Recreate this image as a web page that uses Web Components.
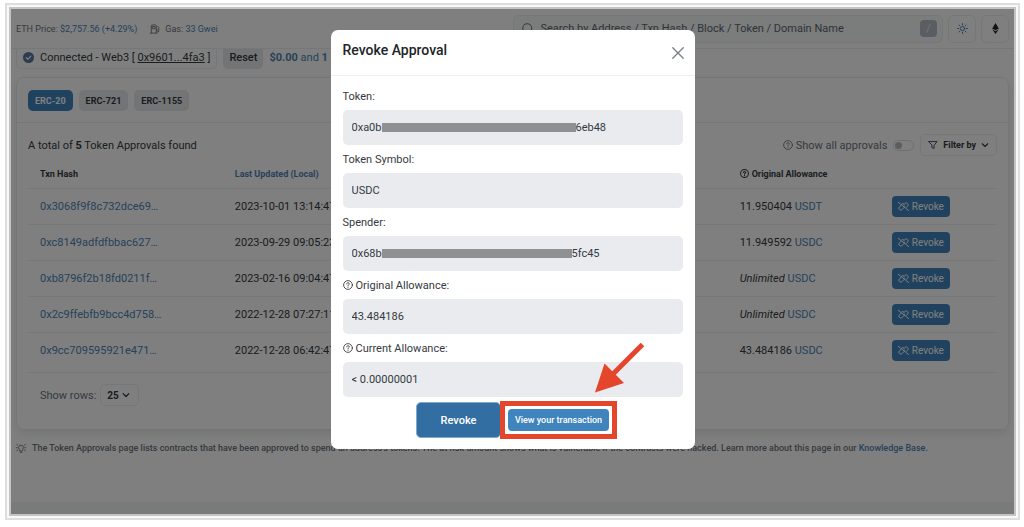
<!DOCTYPE html>
<html lang="en">
<head>
<meta charset="utf-8">
<title>Token Approvals</title>
<style>
body { margin: 0; background: #fff; font-family: Roboto, "Liberation Sans", sans-serif; font-size: 11px; color: #343a40; }
</style>
</head>
<body>
<page-frame>
  <top-bar></top-bar>
  <wallet-bar></wallet-bar>
  <approvals-card></approvals-card>
  <page-note></page-note>
  <revoke-dialog slot="overlay"></revoke-dialog>
</page-frame>

<script>
const BASE = `<style>
*, *::before, *::after { box-sizing: border-box; }
button, input, select { font: inherit; color: inherit; margin: 0; }
button { cursor: pointer; }
a { color: #4c84b4; text-decoration: none; }
</style>`;

class Base extends HTMLElement {
  constructor() {
    super();
    this.attachShadow({ mode: 'open' }).innerHTML = BASE + this.template();
  }
}

const ICONS = {
  help: '<circle cx="8" cy="8" r="7"/><path d="M6 6.2C6 5 6.8 4.4 8 4.4s2.1.7 2.1 1.8C10.100 7.600 8 7.600 8 9.100"/><path d="M8 11.200v.6"/>',
  search: '<circle cx="7" cy="7" r="6"/><path d="M11.500 11.500l3.500 3.500"/>',
  gas: '<path d="M2 14.500V3a1.500 1.500 0 0 1 1.500-1.500h5A1.500 1.500 0 0 1 10 3v11.500M.800 14.500h10.400M4 4h4v3.500H4zM10 8.500h1.200v3a1.400 1.400 0 0 0 2.800 0V5.500L12 3.500"/>',
  sun: '<circle cx="8" cy="8" r="3"/><path d="M8 .8v2M8 13.200v2M.8 8h2M13.200 8h2M2.900 2.900l1.400 1.400M11.700 11.700l1.400 1.400M2.900 13.100l1.400-1.400M11.700 4.300l1.400-1.400"/>',
  eth: '<path fill="currentColor" stroke="none" d="M8 0l4.800 8L8 10.700 3.200 8zM8 16L3.200 9.200 8 12l4.800-2.800z"/>',
  check: '<circle cx="8" cy="8" r="8" fill="currentColor" stroke="none"/><path d="M4.600 8.200L7 10.500 11.400 6" stroke="#fff" stroke-width="1.800"/>',
  funnel: '<path d="M1.500 2.500h13L9.700 8.500v5L6.300 12V8.500z"/>',
  chevron: '<path d="M2.500 5.500L8 11l5.500-5.500"/>',
  close: '<path d="M1 1l14 14M15 1L1 15"/>',
  bulb: '<path d="M6 12.300c0-2-1.800-2.600-1.800-5.100a3.800 3.800 0 0 1 7.600 0c0 2.500-1.800 3.100-1.800 5.100zM6.500 15h3M.3 7.500h1.700M14 7.500h1.700M1.200 2.500l1.500 1M14.800 2.500l-1.500 1M1.200 12.300l1.500-1M14.800 12.300l-1.500-1"/>',
  unlink: '<path d="M.500 2l15 12M4.800 6L2.200 8.400a2.700 2.700 0 0 0 0 3.900 2.700 2.700 0 0 0 3.900 0l2.400-2.400c.8-.9 1-2 .6-3M5.500 4.200c1.200-1 2.600-.6 3.400.4M8.500 5l1.400-1.400a2.800 2.800 0 0 1 4 0 2.800 2.800 0 0 1 0 4L12 9.500"/>'
};
customElements.define('app-icon', class extends HTMLElement {
  connectedCallback() {
    if (this.shadowRoot) return;
    this.attachShadow({ mode: 'open' }).innerHTML = `<style>
      :host { display: inline-flex; width: 10px; height: 10px; flex: none; }
      svg { width: 100%; height: 100%; overflow: visible; }
    </style><svg viewBox="0 0 16 16" fill="none" stroke="currentColor" stroke-width="${this.getAttribute('weight') || 1.4}" stroke-linecap="round" stroke-linejoin="round" aria-hidden="true">${ICONS[this.getAttribute('name')]}</svg>`;
  }
});

customElements.define('page-frame', class extends Base {
  template() { return `<style>
    :host { display: flex; min-height: 100vh; padding: 3px 4px 7px 5px; box-sizing: border-box; }
    .outer { flex: 1; display: flex; border: 2px solid #dedede; background: #f8f8f8; padding: 2px; min-width: 0; }
    .page { flex: 1; min-width: 0; position: relative; display: flex; flex-direction: column; border: 2px solid #c4c4c4; background: #fff; }
    .end { margin-top: auto; height: 12px; background: #f3f7f5; }
    .shade { position: absolute; inset: 0; background: rgba(0,0,0,.5); display: flex; justify-content: center; align-items: flex-start; padding-top: 21px; z-index: 2; }
  </style>
  <div class="outer"><div class="page"><slot></slot><div class="end"></div><div class="shade"><slot name="overlay"></slot></div></div></div>`; }
});

customElements.define('top-bar', class extends Base {
  template() { return `<style>
    :host { display: flex; align-items: center; justify-content: space-between; height: 40px; padding: 0 5px; border-bottom: 1px solid #eceef0; box-sizing: border-box; color: #6c757d; }
    .stats { display: flex; align-items: center; gap: 13px; font-size: 9px; }
    .gas { display: flex; align-items: center; gap: 5px; }
    .tools { display: flex; gap: 5px; width: 50%; }
    form { flex: 1; display: flex; align-items: center; gap: 7px; height: 28px; padding: 0 5px 0 8px; border: 1px solid #eceff1; border-radius: 6px; background: #f7f9f9; }
    form app-icon { width: 12px; height: 12px; }
    input { flex: 1; min-width: 0; border: 0; padding: 0; background: none; outline: 0; }
    input::placeholder { color: #5c6670; opacity: 1; }
    kbd { font: inherit; width: 17px; height: 17px; line-height: 17px; text-align: center; background: #b4bac2; color: #eee; border-radius: 4px; }
    button { width: 28px; height: 28px; padding: 0; display: flex; align-items: center; justify-content: center; border: 1px solid #eceef0; border-radius: 6px; background: none; }
    .sun { color: #4c84b4; } .eth { color: #212529; }
    button app-icon { width: 11px; height: 11px; }
  </style>
  <div class="stats"><span>ETH Price: <a href="#">$2,757.56 (+4.29%)</a></span><span class="gas"><app-icon name="gas"></app-icon><span>Gas: <a href="#">33 Gwei</a></span></span></div>
  <div class="tools"><form role="search"><app-icon name="search"></app-icon><input type="text" aria-label="Search" placeholder="Search by Address / Txn Hash / Block / Token / Domain Name"><kbd>/</kbd></form>
  <button class="sun" aria-label="Theme"><app-icon name="sun"></app-icon></button><button class="eth" aria-label="Network"><app-icon name="eth"></app-icon></button></div>`; }
});

customElements.define('wallet-bar', class extends Base {
  template() { return `<style>
    :host { display: flex; align-items: flex-start; gap: 6px; padding: 0 5px; height: 28px; box-sizing: border-box; }
    .wallet, button { height: 20px; display: flex; align-items: center; border-radius: 0 0 5px 5px; padding: 0 6px 3px; }
    .wallet { gap: 6px; border: 1px solid #eceef0; border-top: 0; white-space: pre; }
    .wallet app-icon { color: #54789c; width: 11px; height: 11px; }
    .wallet a { color: inherit; text-decoration: underline; }
    button { border: 0; background: #e6e8ec; font-weight: 500; }
    p { margin: 0; line-height: 18px; color: #4c84b4; }
    b { font-weight: 700; }
  </style>
  <div class="wallet"><app-icon name="check"></app-icon><span>Connected - Web3 [ <a href="#">0x9601...4fa3</a> ]</span></div>
  <button>Reset</button><p><b>$0.00</b> and <b>1</b></p>`; }
});

const ROWS = [
  ['0x3068f9f8c732dce69…', '2023-10-01 13:14:47', '11.950404', 'USDT'],
  ['0xc8149adfdfbbac627…', '2023-09-29 09:05:23', '11.949592', 'USDC'],
  ['0xb8796f2b18fd0211f…', '2023-02-16 09:04:47', '<i>Unlimited</i>', 'USDC'],
  ['0x2c9ffebfb9bcc4d758…', '2022-12-28 07:27:11', '<i>Unlimited</i>', 'USDC'],
  ['0x9cc709595921e471…', '2022-12-28 06:42:47', '43.484186', 'USDC']
];
customElements.define('approvals-card', class extends Base {
  template() { return `<style>
    :host { display: block; margin: 0 5px; border: 1px solid #e8ebec; border-radius: 8px; box-shadow: 0 4px 8px rgba(60,80,80,.12); }
    .tabs { display: flex; gap: 6px; padding: 12px 11px 11px; border-bottom: 1px solid #eceef0; }
    .tabs button { height: 21px; border: 0; border-radius: 5px; padding: 0 7px; background: #e6e8ec; font-size: 9px; font-weight: 700; }
    .tabs .on { background: #4084be; color: #fff; }
    .bar { display: flex; align-items: center; gap: 6px; padding: 11px 11px 0; }
    .bar p { margin: 0 auto 0 0; } b { font-weight: 700; }
    .switch { display: flex; align-items: center; gap: 3px; color: #6c757d; }
    .switch input { appearance: none; width: 21px; height: 11px; margin-left: 3px; border: 1px solid #dcdfe2; border-radius: 6px; display: flex; align-items: center; padding: 0 1px; }
    .switch input::before { content: ""; width: 7px; height: 7px; border-radius: 50%; background: #b8bcc0; }
    .filter { height: 22px; display: flex; align-items: center; gap: 5px; padding: 0 7px; border: 1px solid #eceef0; border-radius: 5px; background: none; font-size: 9px; font-weight: 700; }
    .filter app-icon:last-child { width: 8px; height: 8px; }
    .wrap { padding: 3px 11px 0; }
    table { width: 100%; table-layout: fixed; border-collapse: separate; border-spacing: 0; }
    th, td { text-align: left; padding: 0 12px; height: 36px; border-bottom: 1px solid #eceef0; white-space: nowrap; font-weight: 400; }
    th { height: 30px; font-size: 9px; font-weight: 700; }
    th app-icon { width: 9px; height: 9px; margin-right: 3px; vertical-align: -1px; }
    tr:last-child td { height: 40px; padding-bottom: 4px; }
    thead tr:last-child th { height: 30px; }
    .c1 { width: 20.1%; } .c3 { width: 15.7%; } .c4 { width: 12.1%; }
    td button { display: flex; align-items: center; gap: 3px; height: 21px; padding: 0 6px; border: 0; border-radius: 4px; background: #4084be; color: #fff; font-size: 10px; }
    td button app-icon { width: 11px; height: 11px; }
    .rows { display: flex; align-items: center; gap: 4px; padding: 11px 23px 23px; color: #6c757d; }
    .pick { display: grid; align-items: center; width: 39px; color: #343a40; }
    .pick > * { grid-area: 1 / 1; }
    select { appearance: none; height: 22px; padding: 0 6px; border: 1px solid #eceef0; border-radius: 5px; background: none; font-size: 10px; font-weight: 700; }
    .pick app-icon { width: 8px; height: 8px; justify-self: end; margin-right: 9px; pointer-events: none; }
  </style>
  <div class="tabs"><button class="on">ERC-20</button><button>ERC-721</button><button>ERC-1155</button></div>
  <div class="bar"><p>A total of <b>5</b> Token Approvals found</p>
    <label class="switch"><app-icon name="help"></app-icon>Show all approvals<input type="checkbox"></label>
    <button class="filter"><app-icon name="funnel"></app-icon>Filter by<app-icon name="chevron" weight="2.200"></app-icon></button></div>
  <div class="wrap"><table><thead><tr><th class="c1">Txn Hash</th><th><a href="#">Last Updated (Local)</a></th><th class="c3"><app-icon name="help" weight="1.800"></app-icon>Original Allowance</th><th class="c4"></th></tr></thead>
  <tbody>${ROWS.map(r => `<tr><td><a href="#">${r[0]}</a></td><td>${r[1]}</td><td>${r[2]} <a href="#">${r[3]}</a></td><td><button><app-icon name="unlink"></app-icon>Revoke</button></td></tr>`).join('')}</tbody></table></div>
  <div class="rows"><label for="n">Show rows:</label><span class="pick"><select id="n"><option>25</option></select><app-icon name="chevron" weight="2.400"></app-icon></span></div>`; }
});

customElements.define('page-note', class extends Base {
  template() { return `<style>
    :host { display: flex; align-items: center; gap: 6px; padding: 11px 5px; font-size: 9px; font-weight: 500; line-height: 14px; color: #6c757d; white-space: nowrap; }
  </style><app-icon name="bulb"></app-icon><span>The Token Approvals page lists contracts that have been approved to spend an address's tokens. The at risk amount shows what is vulnerable if the contracts were hacked. Learn more about this page in our <a href="#">Knowledge Base</a>.</span>`; }
});

customElements.define('modal-field', class extends HTMLElement {
  connectedCallback() {
    if (this.shadowRoot) return;
    const a = n => this.getAttribute(n);
    const value = a('tail')
      ? `<input id="f" class="part" readonly value="${a('value')}"><span class="bar"></span><input class="part" aria-label="${a('label')} end" readonly value="${a('tail')}">`
      : `<input id="f" readonly value="${a('value')}">`;
    this.attachShadow({ mode: 'open' }).innerHTML = BASE + `<style>
      :host { display: block; }
      label { display: flex; align-items: center; gap: 3px; height: 28px; }
      .box { display: flex; align-items: center; height: 35px; padding: 0 9px; border-radius: 5px; background: #e9ebee; }
      input { flex: 1; min-width: 0; border: 0; padding: 0; background: none; outline: 0; }
      .part { flex: none; width: 30px; }
      .part:last-child { width: 40px; }
      .bar { height: 9px; width: var(--bar, 194px); background: #8e9092; }
    </style><label for="f">${this.hasAttribute('help') ? '<app-icon name="help"></app-icon>' : ''}${a('label')}:</label><div class="box">${value}</div>`;
  }
});

customElements.define('revoke-dialog', class extends Base {
  template() { return `<style>
    :host { display: block; position: relative; width: 364px; background: #fff; border-radius: 7px; }
    header { display: flex; align-items: center; justify-content: space-between; height: 46px; padding: 0 11px 0 12px; border-bottom: 1px solid #eceef0; }
    h2 { margin: 0 0 6px; font-size: 14px; font-weight: 500; color: #212529; }
    header button { border: 0; background: none; padding: 0; display: flex; color: #7a7f85; }
    header app-icon { width: 12px; height: 12px; }
    .body { padding: 6px 12px 0; }
    footer { display: flex; align-items: center; justify-content: center; padding: 4px 0 10px 8px; }
    .go { width: 85px; height: 36px; border: 1px solid #7fa8cb; border-radius: 5px; background: #326ea2; color: #fff; font-weight: 500; }
    .mark { border: 5px solid #e5452b; padding: 3px; background: #fff; margin-left: -1px; }
    .mark button { display: block; width: 101px; height: 22px; border: 0; border-radius: 4px; padding: 0; background: #4084be; color: #fff; font-size: 9px; font-weight: 500; }
    .arrow { position: absolute; right: 50px; bottom: 56px; width: 50px; height: 50px; }
  </style>
  <header><h2>Revoke Approval</h2><button aria-label="Close"><app-icon name="close" weight="1.800"></app-icon></button></header>
  <div class="body">
    <modal-field label="Token" value="0xa0b" tail="6eb48"></modal-field>
    <modal-field label="Token Symbol" value="USDC"></modal-field>
    <modal-field label="Spender" value="0x68b" tail="5fc45" style="--bar: 190px"></modal-field>
    <modal-field help label="Original Allowance" value="43.484186"></modal-field>
    <modal-field help label="Current Allowance" value="&lt; 0.00000001"></modal-field>
  </div>
  <footer><button class="go">Revoke</button><span class="mark"><button>View your transaction</button></span></footer>
  <svg class="arrow" viewBox="0 0 50 50" aria-hidden="true"><path d="M47.500 1.500L17 32" stroke="#e5452b" stroke-width="5"/><path d="M0 49.500L9.500 20.500 29 40z" fill="#e5452b"/></svg>`; }
});
</script>
</body>
</html>
